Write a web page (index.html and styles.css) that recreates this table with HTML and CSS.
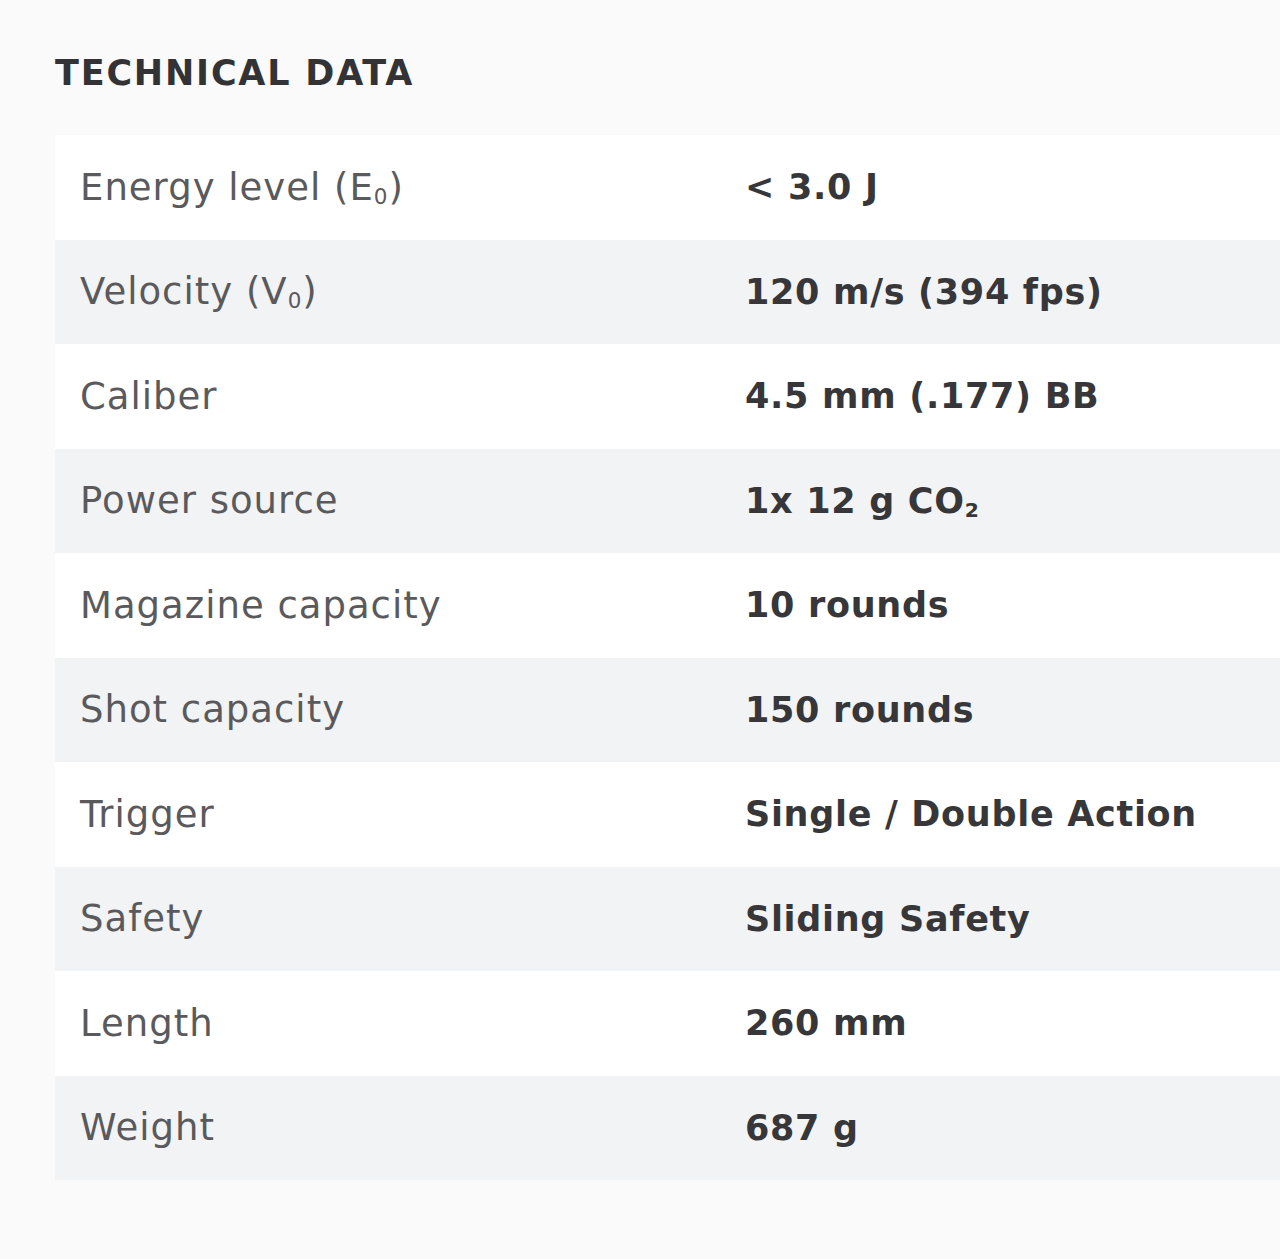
FILE: index.html
```html
<!DOCTYPE html>
<html lang="en">
<head>
<meta charset="utf-8">
<title>Technical Data</title>
<link rel="stylesheet" href="styles.css">
</head>
<body>
<section class="tech">
  <h2 class="tech-title">TECHNICAL DATA</h2>
  <table class="tech-table">
    <colgroup><col class="col-label"><col class="col-value"></colgroup>
    <tbody>
      <tr><td class="label">Energy level (E<sub>0</sub>)</td><td class="value">&lt; 3.0 J</td></tr>
      <tr><td class="label">Velocity (V<sub>0</sub>)</td><td class="value">120 m/s (394 fps)</td></tr>
      <tr><td class="label">Caliber</td><td class="value">4.5 mm (.177) BB</td></tr>
      <tr><td class="label">Power source</td><td class="value">1x 12 g CO<sub>2</sub></td></tr>
      <tr><td class="label">Magazine capacity</td><td class="value">10 rounds</td></tr>
      <tr><td class="label">Shot capacity</td><td class="value">150 rounds</td></tr>
      <tr><td class="label">Trigger</td><td class="value">Single / Double Action</td></tr>
      <tr><td class="label">Safety</td><td class="value">Sliding Safety</td></tr>
      <tr><td class="label">Length</td><td class="value">260 mm</td></tr>
      <tr><td class="label">Weight</td><td class="value">687 g</td></tr>
    </tbody>
  </table>
</section>
</body>
</html>
```
FILE: styles.css
```css
html, body {
  margin: 0;
  padding: 0;
  background: #fafafa;
}
body {
  font-family: "DejaVu Sans", sans-serif;
}
.tech {
  padding: 50px 0 0 55px;
}
.tech-title {
  margin: 0;
  font-size: 35px;
  font-weight: 700;
  color: #333336;
  line-height: 46px;
  height: 85px;
  letter-spacing: 1.8px;
}
.tech-table {
  width: 1225px;
  border-collapse: collapse;
  table-layout: fixed;
}
.col-label {
  width: 665px;
}
.tech-table tr {
  height: 104.5px;
  background: #ffffff;
}
.tech-table tr:nth-child(even) {
  background: #f2f3f5;
}
.tech-table td {
  padding: 0 25px;
  vertical-align: middle;
  white-space: nowrap;
}
.label {
  font-size: 37px;
  color: #5a5a5c;
  font-weight: 400;
  letter-spacing: 1px;
}
.value {
  font-size: 35px;
  font-weight: 700;
  color: #37373a;
  letter-spacing: 0.7px;
}
sub {
  font-size: 0.58em;
  vertical-align: -0.2em;
  line-height: 0;
}
```
